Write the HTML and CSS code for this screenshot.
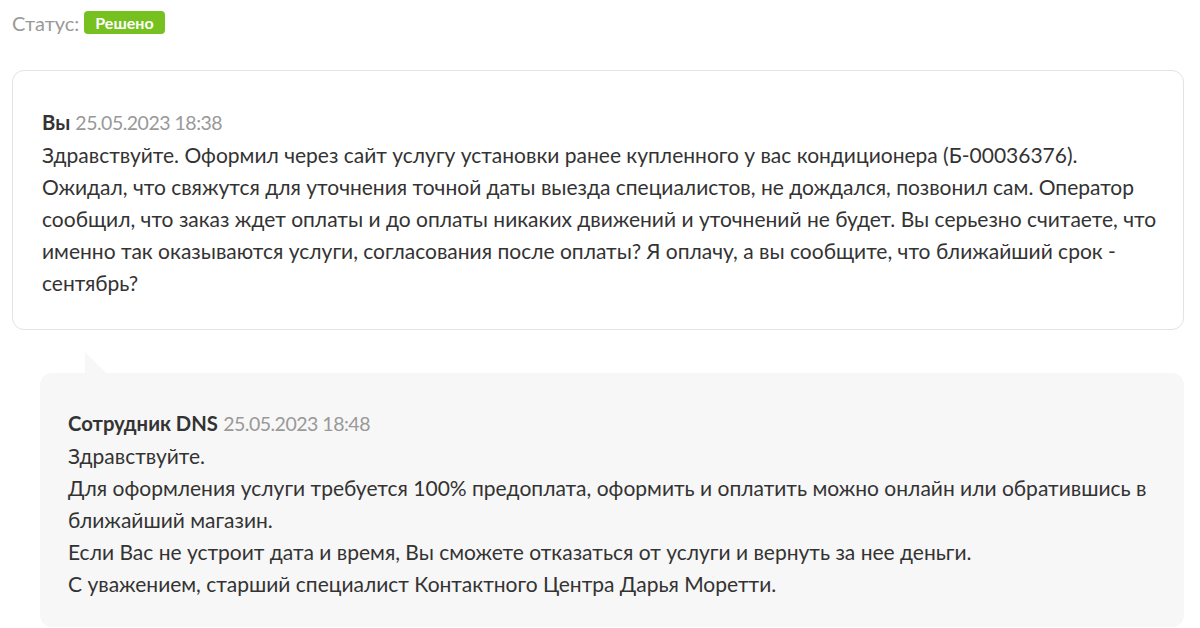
FILE: index.html
```html
<!DOCTYPE html>
<html lang="ru"><head><meta charset="utf-8"><link rel="stylesheet" href="styles.css"></head>
<body>
<div class="page">
  <div class="status">
    <span class="status-label">Статус:</span>
    <span class="badge">Решено</span>
  </div>
  <div class="card">
    <div class="meta"><span class="author">Вы</span> <span class="date">25.05.2023 18:38</span></div>
    <div class="text">Здравствуйте. Оформил через сайт услугу установки ранее купленного у вас кондиционера (Б-00036376).<br>Ожидал, что свяжутся для уточнения точной даты выезда специалистов, не дождался, позвонил сам. Оператор<br>сообщил, что заказ ждет оплаты и до оплаты никаких движений и уточнений не будет. Вы серьезно считаете, что<br>именно так оказываются услуги, согласования после оплаты? Я оплачу, а вы сообщите, что ближайший срок -<br>сентябрь?</div>
  </div>
  <div class="reply">
    <div class="meta"><span class="author">Сотрудник DNS</span> <span class="date">25.05.2023 18:48</span></div>
    <div class="text">Здравствуйте.<br>Для оформления услуги требуется 100% предоплата, оформить и оплатить можно онлайн или обратившись в ближайший магазин.<br>Если Вас не устроит дата и время, Вы сможете отказаться от услуги и вернуть за нее деньги.<br>С уважением, старший специалист Контактного Центра Дарья Моретти.</div>
  </div>
</div>
</body></html>
```
FILE: styles.css
```css
html,body{margin:0;padding:0;background:#fff}
body{font-family:"Lato","Liberation Sans",sans-serif;color:#333;font-size:21px;line-height:32px}
.page{padding:0 16px 0 12px}
.status{display:flex;align-items:center;gap:5px;height:46px}
.status-label{color:#999;font-size:20px}
.badge{display:inline-flex;align-items:center;justify-content:center;background:#76c11f;color:#fff;font-weight:700;font-size:16px;line-height:23px;height:23px;padding:0 11px;border-radius:4px;margin-top:-2px}
.card{margin-top:24px;border:1px solid #e3e3e3;border-radius:12px;padding:35px 2px 30px 29px}
.meta{font-size:20.25px}
.author{font-weight:700;color:#333}
.date{color:#999;font-size:19.5px;letter-spacing:-0.5px}
.reply{position:relative;margin:43px 0 0 28px;background:#f7f7f7;border-radius:12px;padding:34px 26px 27px 28px}
.reply::before{content:"";position:absolute;left:45px;top:-21px;width:21px;height:21px;background:#f7f7f7;clip-path:polygon(0 0,0 100%,100% 100%)}
```
